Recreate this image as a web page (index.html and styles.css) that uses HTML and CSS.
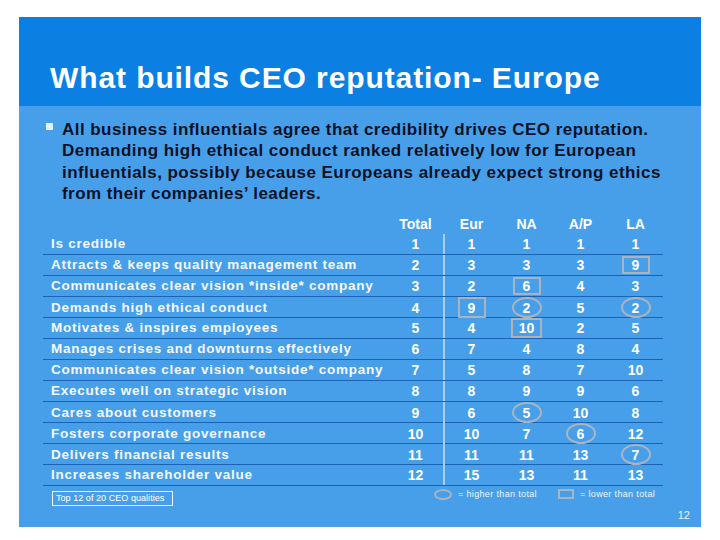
FILE: index.html
```html
<!DOCTYPE html>
<html>
<head>
<meta charset="utf-8">
<link rel="stylesheet" href="styles.css">
</head>
<body>
<div class="slide">
  <div class="header">
    <h1 class="title">What builds CEO reputation- Europe</h1>
  </div>
  <div class="body">
    <div class="bullet-row">
      <span class="bullet"></span>
      <p class="para">All business influentials agree that credibility drives CEO reputation. Demanding high ethical conduct ranked relatively low for European influentials, possibly because Europeans already expect strong ethics from their companies’ leaders.</p>
    </div>
    <div class="table">
      <div class="row head">
        <div class="cell label"></div>
        <div class="cell">Total</div>
        <div class="cell">Eur</div>
        <div class="cell">NA</div>
        <div class="cell">A/P</div>
        <div class="cell">LA</div>
      </div>
      <div class="row">
        <div class="cell label">Is credible</div>
        <div class="cell">1</div>
        <div class="cell eur">1</div>
        <div class="cell">1</div>
        <div class="cell">1</div>
        <div class="cell">1</div>
      </div>
      <div class="row">
        <div class="cell label">Attracts &amp; keeps quality management team</div>
        <div class="cell">2</div>
        <div class="cell eur">3</div>
        <div class="cell">3</div>
        <div class="cell">3</div>
        <div class="cell"><span class="box">9</span></div>
      </div>
      <div class="row">
        <div class="cell label">Communicates clear vision *inside* company</div>
        <div class="cell">3</div>
        <div class="cell eur">2</div>
        <div class="cell"><span class="box">6</span></div>
        <div class="cell">4</div>
        <div class="cell">3</div>
      </div>
      <div class="row">
        <div class="cell label">Demands high ethical conduct</div>
        <div class="cell">4</div>
        <div class="cell eur"><span class="box tall">9</span></div>
        <div class="cell"><span class="ring">2</span></div>
        <div class="cell">5</div>
        <div class="cell"><span class="ring">2</span></div>
      </div>
      <div class="row">
        <div class="cell label">Motivates &amp; inspires employees</div>
        <div class="cell">5</div>
        <div class="cell eur">4</div>
        <div class="cell"><span class="box wide">10</span></div>
        <div class="cell">2</div>
        <div class="cell">5</div>
      </div>
      <div class="row">
        <div class="cell label">Manages crises and downturns effectively</div>
        <div class="cell">6</div>
        <div class="cell eur">7</div>
        <div class="cell">4</div>
        <div class="cell">8</div>
        <div class="cell">4</div>
      </div>
      <div class="row">
        <div class="cell label">Communicates clear vision *outside* company</div>
        <div class="cell">7</div>
        <div class="cell eur">5</div>
        <div class="cell">8</div>
        <div class="cell">7</div>
        <div class="cell">10</div>
      </div>
      <div class="row">
        <div class="cell label">Executes well on strategic vision</div>
        <div class="cell">8</div>
        <div class="cell eur">8</div>
        <div class="cell">9</div>
        <div class="cell">9</div>
        <div class="cell">6</div>
      </div>
      <div class="row">
        <div class="cell label">Cares about customers</div>
        <div class="cell">9</div>
        <div class="cell eur">6</div>
        <div class="cell"><span class="ring">5</span></div>
        <div class="cell">10</div>
        <div class="cell">8</div>
      </div>
      <div class="row">
        <div class="cell label">Fosters corporate governance</div>
        <div class="cell">10</div>
        <div class="cell eur">10</div>
        <div class="cell">7</div>
        <div class="cell"><span class="ring">6</span></div>
        <div class="cell">12</div>
      </div>
      <div class="row">
        <div class="cell label">Delivers financial results</div>
        <div class="cell">11</div>
        <div class="cell eur">11</div>
        <div class="cell">11</div>
        <div class="cell">13</div>
        <div class="cell"><span class="ring">7</span></div>
      </div>
      <div class="row">
        <div class="cell label">Increases shareholder value</div>
        <div class="cell">12</div>
        <div class="cell eur">15</div>
        <div class="cell">13</div>
        <div class="cell">11</div>
        <div class="cell">13</div>
      </div>
    </div>
    <div class="footer">
      <div class="note">Top 12 of 20 CEO qualities</div>
      <div class="legend legend-high">
        <span class="key-ring"></span>
        <span class="key-text">= higher than total</span>
      </div>
      <div class="legend">
        <span class="key-box"></span>
        <span class="key-text">= lower than total</span>
      </div>
    </div>
    <div class="page-num">12</div>
  </div>
</div>
</body>
</html>
```

FILE: styles.css
```css
html, body {
  margin: 0;
  padding: 0;
  background: #ffffff;
}

body {
  font-family: "Liberation Sans", Arial, sans-serif;
}

.slide {
  margin: 17px 0 0 19px;
  width: 682px;
  height: 510px;
  display: flex;
  flex-direction: column;
}

.header {
  height: 89px;
  background: #0b7fe2;
  box-sizing: border-box;
  padding: 44px 0 0 31px;
}

.title {
  margin: 0;
  font-size: 30px;
  line-height: 34px;
  letter-spacing: 0.9px;
  font-weight: bold;
  color: #ffffff;
}

.body {
  flex: 1;
  background: #479fea;
  display: flex;
  flex-direction: column;
  padding-top: 13px;
}

.bullet-row {
  display: flex;
  align-items: flex-start;
  padding-left: 27px;
}

.bullet {
  flex: none;
  width: 7px;
  height: 7px;
  margin-top: 4px;
  background: #e4f1fd;
}

.para {
  margin: 0 0 0 9px;
  width: 615px;
  font-size: 17px;
  line-height: 21.3px;
  letter-spacing: 0.45px;
  font-weight: bold;
  color: #0e1226;
}

.table {
  margin: 9px 0 0 24px;
  width: 620px;
}

.row {
  display: grid;
  grid-template-columns: 345px 55px 57px 53px 55px 55px;
  height: 21px;
  box-sizing: border-box;
  border-bottom: 1px solid #1a62b4;
}

.row.head {
  border-bottom: none;
}

.cell {
  display: flex;
  align-items: center;
  justify-content: center;
  color: #ffffff;
  font-weight: bold;
  font-size: 14px;
  line-height: 16px;
}

.cell.label {
  justify-content: flex-start;
  padding-left: 8px;
  font-size: 13.5px;
  letter-spacing: 0.75px;
  color: #f4f9ff;
  white-space: nowrap;
}

.cell.eur {
  border-left: 2px solid #a6d0f3;
  padding-right: 2px;
}

.box, .ring {
  display: inline-flex;
  align-items: center;
  justify-content: center;
  box-sizing: border-box;
  border: 2px solid #a9b4c0;
}

.box {
  width: 28px;
  height: 18px;
}

.box.tall {
  height: 21px;
}

.box.wide {
  width: 31px;
  height: 20px;
}

.ring {
  width: 30px;
  height: 21px;
  border-radius: 50%;
}

.footer {
  display: flex;
  align-items: flex-start;
  margin-left: 24px;
  height: 22px;
}

.note {
  margin: 5px 0 0 9px;
  width: 121px;
  height: 15px;
  box-sizing: border-box;
  border: 1px solid #f0f6fd;
  font-size: 9px;
  line-height: 13px;
  letter-spacing: 0.05px;
  padding-left: 3px;
  color: #ffffff;
  white-space: nowrap;
}

.legend {
  display: flex;
  align-items: center;
  margin-top: 2px;
  height: 12px;
}

.legend-high {
  margin-left: 261px;
  width: 124px;
}

.key-ring {
  width: 18px;
  height: 11px;
  box-sizing: border-box;
  border: 2px solid #a9b4c0;
  border-radius: 50%;
}

.key-box {
  width: 16px;
  height: 10px;
  box-sizing: border-box;
  border: 2px solid #a9b4c0;
}

.key-text {
  margin-left: 6px;
  font-size: 9px;
  letter-spacing: 0.35px;
  color: #eef5fd;
  white-space: nowrap;
}

.page-num {
  margin-top: auto;
  align-self: flex-end;
  padding: 0 11px 6px 0;
  font-size: 11px;
  color: #e8f2fc;
}
```
